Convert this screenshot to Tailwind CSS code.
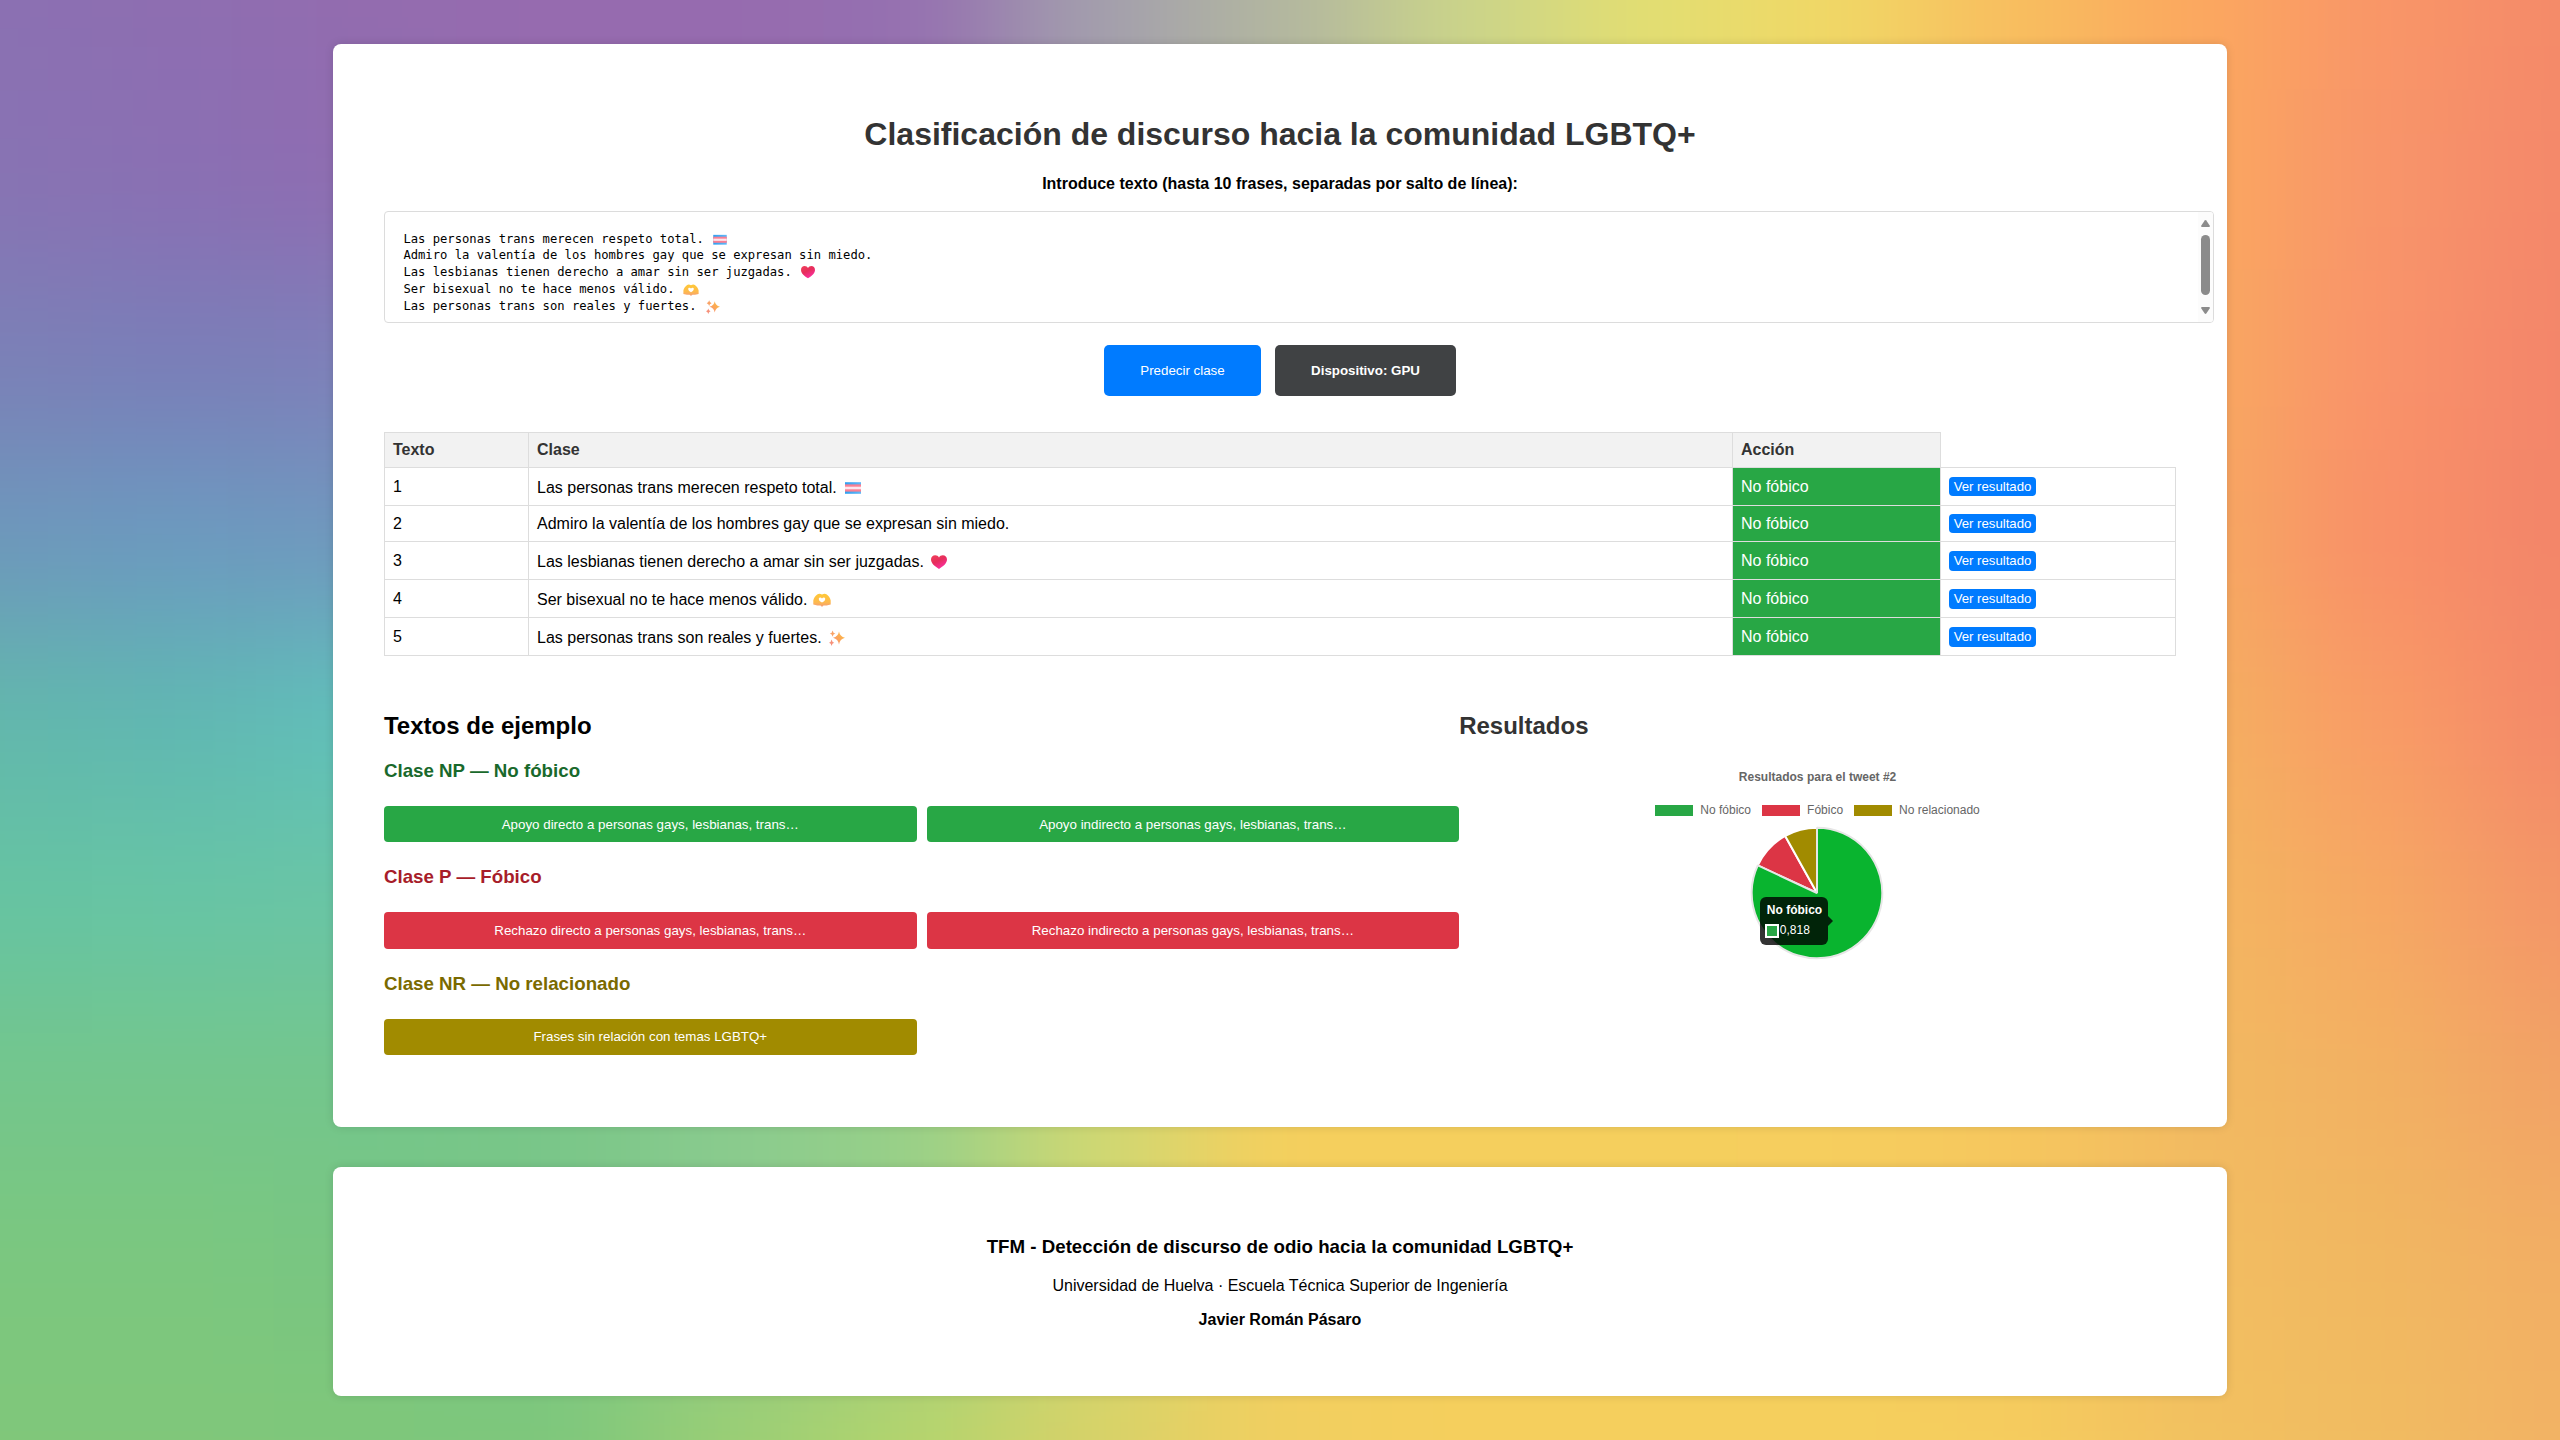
<!DOCTYPE html>
<html lang="es">
<head>
<meta charset="utf-8">
<title>Clasificación de discurso hacia la comunidad LGBTQ+</title>
<script src="https://cdn.jsdelivr.net/npm/@tailwindcss/browser@4"></script>
</head>
<body class="relative isolate h-[1440px] w-[2560px] overflow-hidden bg-[#f5cf5d] text-base text-black font-['Liberation_Sans',Arial,sans-serif]">

<!-- Soft rainbow backdrop -->
<svg class="absolute inset-0 -z-10 h-full w-full" viewBox="0 0 1568 882" preserveAspectRatio="none">
  <defs><filter id="soft" filterUnits="userSpaceOnUse" x="-300" y="-300" width="2168" height="1482" color-interpolation-filters="sRGB"><feGaussianBlur stdDeviation="40"/></filter></defs>
  <g id="mesh" filter="url(#soft)"></g>
</svg>

<!-- Emoji symbols -->
<svg class="absolute h-0 w-0">
  <defs>
    <linearGradient id="gh" x1="0" y1="0" x2="0.6" y2="1"><stop offset="0" stop-color="#f2405a"/><stop offset="0.5" stop-color="#e62e5c"/><stop offset="1" stop-color="#fb2fa0"/></linearGradient>
    <linearGradient id="gy" x1="0" y1="0" x2="0" y2="1"><stop offset="0" stop-color="#ffc936"/><stop offset="0.65" stop-color="#fdb94e"/><stop offset="1" stop-color="#f49a78"/></linearGradient>
    <linearGradient id="gs" x1="1" y1="0" x2="0" y2="1"><stop offset="0" stop-color="#fdc23c"/><stop offset="0.6" stop-color="#fba35c"/><stop offset="1" stop-color="#f5828a"/></linearGradient>
    <linearGradient id="gb" x1="0" y1="0" x2="1" y2="0"><stop offset="0" stop-color="#2f9ff0"/><stop offset="1" stop-color="#62b8f7"/></linearGradient>
    <symbol id="flag" viewBox="0 0 18 16">
      <rect x="1" y="2.2" width="16" height="11.6" fill="url(#gb)"/><rect x="1" y="4.4" width="16" height="7.2" fill="#fb7f92"/><rect x="1" y="6.7" width="16" height="2.6" fill="#fde6ee"/>
    </symbol>
    <symbol id="heart" viewBox="0 0 18 16">
      <path d="M9 15C5.4 12.9 1 9.6 1 5.6 1 3 2.8 1.2 5.2 1.2 6.9 1.2 8.3 2.1 9 3.5 9.7 2.1 11.1 1.2 12.8 1.2 15.2 1.2 17 3 17 5.6 17 9.6 12.6 12.9 9 15Z" fill="url(#gh)"/>
    </symbol>
    <symbol id="hands" viewBox="0 0 18 16">
      <path fill-rule="evenodd" d="M0.3 12.6V8.6C0.7 6 2.3 4 4.6 2.3 5.6 1.5 7.2 1.4 9 2.6 10.8 1.4 12.4 1.5 13.4 2.3 15.7 4 17.3 6 17.7 8.6V12.6L13.6 13.5C12 13.6 10.5 13.3 9.8 14L9 14.9 8.2 14C7.5 13.3 6 13.6 4.4 13.5ZM9 10.6C11 9.4 12.2 8.2 12.2 6.9 12.2 5.3 10.1 4.9 9 6.4 7.9 4.9 5.8 5.3 5.8 6.9 5.8 8.2 7 9.4 9 10.6Z" fill="url(#gy)"/>
    </symbol>
    <symbol id="sparkles" viewBox="0 0 18 16">
      <path fill="url(#gs)" d="M11 1.4Q11.8 6.4 17 7.8 11.8 9.2 11 14.4 10.2 9.2 5 7.8 10.2 6.4 11 1.4Z"/>
      <path fill="#f9a266" d="M4.6 0.4Q5 3 7.4 3.6 5 4.2 4.6 6.8 4.2 4.2 1.8 3.6 4.2 3 4.6 0.4Z"/>
      <path fill="#f69079" d="M3.6 9.6Q4 12.2 6.2 12.8 4 13.4 3.6 16 3.2 13.4 1 12.8 3.2 12.2 3.6 9.6Z"/>
    </symbol>
  </defs>
</svg>

<main class="ml-[332.8px] mt-11 flex h-[1082.5px] w-[1894.4px] flex-col rounded-lg bg-white px-[51.2px] pt-[72px] shadow-[0_0_10px_rgba(0,0,0,0.12)]">
  <h1 class="text-center text-[32px] leading-9 font-bold text-[#333]">Clasificación de discurso hacia la comunidad LGBTQ+</h1>
  <label class="mt-[23px] text-center text-base leading-[18px] font-bold">Introduce texto (hasta 10 frases, separadas por salto de línea):</label>

  <div class="mt-[18px] flex h-28 w-[1829.6px] justify-between overflow-hidden rounded border border-[#dcdcdc] bg-white">
    <div class="pl-[18.4px] pt-[19px] font-['DejaVu_Sans_Mono',monospace] text-[12.18px]">
      <div class="flex h-[17px] items-center gap-2 whitespace-nowrap">Las personas trans merecen respeto total.<svg class="h-[13.5px] w-4 shrink-0"><use href="#flag"/></svg></div>
      <div class="flex h-[15px] items-center whitespace-nowrap">Admiro la valentía de los hombres gay que se expresan sin miedo.</div>
      <div class="flex h-[18px] items-center gap-2 whitespace-nowrap">Las lesbianas tienen derecho a amar sin ser juzgadas.<svg class="h-[14px] w-4 shrink-0"><use href="#heart"/></svg></div>
      <div class="flex h-[17px] items-center gap-2 whitespace-nowrap">Ser bisexual no te hace menos válido.<svg class="h-[14px] w-4 shrink-0"><use href="#hands"/></svg></div>
      <div class="flex h-[17px] items-center gap-2 whitespace-nowrap">Las personas trans son reales y fuertes.<svg class="h-[14px] w-4 shrink-0"><use href="#sparkles"/></svg></div>
    </div>
    <div class="flex w-[15px] flex-col items-center bg-[#fcfcfc] pt-2">
      <svg class="h-[7px] w-[9px]" viewBox="0 0 9 7"><path d="M4.5 0 5.3 .6 9 6 8.4 7H.6L0 6 3.7 .6Z" fill="#8b8b8b"/></svg>
      <div class="mt-2 h-[60px] w-[9px] rounded-full bg-[#8b8b8b]"></div>
      <svg class="mt-3 h-[7px] w-[9px]" viewBox="0 0 9 7"><path d="M4.5 7 5.3 6.4 9 1 8.4 0H.6L0 1 3.7 6.4Z" fill="#8b8b8b"/></svg>
    </div>
  </div>

  <div class="mt-[22px] flex justify-center gap-3.5 text-[13.333px] text-white">
    <button class="h-[51px] w-[157px] rounded-[5px] bg-[#007bff]">Predecir clase</button>
    <button class="h-[51px] w-[181px] rounded-[5px] bg-[#404244] font-bold">Dispositivo: GPU</button>
  </div>

  <table class="mt-9 w-[1792px] table-fixed border-collapse text-left text-base leading-[18px]">
    <colgroup><col class="w-36"><col class="w-[1204px]"><col class="w-[208px]"><col></colgroup>
    <thead>
      <tr class="h-[35px] text-[#333]">
        <th class="border border-[#ddd] bg-[#f2f2f2] px-2 py-0">Texto</th>
        <th class="border border-[#ddd] bg-[#f2f2f2] px-2 py-0">Clase</th>
        <th class="border border-[#ddd] bg-[#f2f2f2] px-2 py-0">Acción</th>
      </tr>
    </thead>
    <tbody>
      <tr class="h-[38px]">
        <td class="border border-[#ddd] px-2">1</td>
        <td class="border border-[#ddd] px-2"><div class="flex items-center pt-0.5">Las personas trans merecen respeto total.<svg class="ml-[7px] h-4 w-[18px]"><use href="#flag"/></svg></div></td>
        <td class="border border-[#ddd] bg-[#28a745] px-2 text-white">No fóbico</td>
        <td class="border border-[#ddd] px-2"><button class="block h-[19px] w-[87px] rounded-[4px] bg-[#007bff] text-[13.2px] leading-[19px] text-white">Ver resultado</button></td>
      </tr>
      <tr class="h-9">
        <td class="border border-[#ddd] px-2">2</td>
        <td class="border border-[#ddd] px-2">Admiro la valentía de los hombres gay que se expresan sin miedo.</td>
        <td class="border border-[#ddd] bg-[#28a745] px-2 text-white">No fóbico</td>
        <td class="border border-[#ddd] px-2"><button class="block h-[19px] w-[87px] rounded-[4px] bg-[#007bff] text-[13.2px] leading-[19px] text-white">Ver resultado</button></td>
      </tr>
      <tr class="h-[38px]">
        <td class="border border-[#ddd] px-2">3</td>
        <td class="border border-[#ddd] px-2"><div class="flex items-center pt-0.5">Las lesbianas tienen derecho a amar sin ser juzgadas.<svg class="ml-1.5 h-4 w-[18px]"><use href="#heart"/></svg></div></td>
        <td class="border border-[#ddd] bg-[#28a745] px-2 text-white">No fóbico</td>
        <td class="border border-[#ddd] px-2"><button class="block h-5 w-[87px] rounded-[4px] bg-[#007bff] text-[13.2px] leading-[19px] text-white">Ver resultado</button></td>
      </tr>
      <tr class="h-[38px]">
        <td class="border border-[#ddd] px-2">4</td>
        <td class="border border-[#ddd] px-2"><div class="flex items-center pt-0.5">Ser bisexual no te hace menos válido.<svg class="ml-1.5 h-4 w-[18px]"><use href="#hands"/></svg></div></td>
        <td class="border border-[#ddd] bg-[#28a745] px-2 text-white">No fóbico</td>
        <td class="border border-[#ddd] px-2"><button class="block h-5 w-[87px] rounded-[4px] bg-[#007bff] text-[13.2px] leading-[19px] text-white">Ver resultado</button></td>
      </tr>
      <tr class="h-[38px]">
        <td class="border border-[#ddd] px-2">5</td>
        <td class="border border-[#ddd] px-2"><div class="flex items-center pt-0.5">Las personas trans son reales y fuertes.<svg class="ml-1.5 h-4 w-[18px]"><use href="#sparkles"/></svg></div></td>
        <td class="border border-[#ddd] bg-[#28a745] px-2 text-white">No fóbico</td>
        <td class="border border-[#ddd] px-2"><button class="block h-5 w-[87px] rounded-[4px] bg-[#007bff] text-[13.2px] leading-[19px] text-white">Ver resultado</button></td>
      </tr>
    </tbody>
  </table>

  <div class="mt-14 flex">
    <section class="flex w-[1075.2px] flex-col">
      <h2 class="text-2xl leading-7 font-bold">Textos de ejemplo</h2>
      <h3 class="mt-5 text-[18.72px] leading-[22px] font-bold text-[#19692c]">Clase NP — No fóbico</h3>
      <div class="mt-6 grid grid-cols-2 gap-2.5 text-[13.333px] text-white">
        <button class="h-9 rounded-[4px] bg-[#28a745] pt-px">Apoyo directo a personas gays, lesbianas, trans…</button>
        <button class="h-9 rounded-[4px] bg-[#28a745] pt-px">Apoyo indirecto a personas gays, lesbianas, trans…</button>
      </div>
      <h3 class="mt-6 text-[18.72px] leading-[22px] font-bold text-[#a71d2a]">Clase P — Fóbico</h3>
      <div class="mt-6 grid grid-cols-2 gap-2.5 text-[13.333px] text-white">
        <button class="h-[37px] rounded-[4px] bg-[#dc3545]">Rechazo directo a personas gays, lesbianas, trans…</button>
        <button class="h-[37px] rounded-[4px] bg-[#dc3545]">Rechazo indirecto a personas gays, lesbianas, trans…</button>
      </div>
      <h3 class="mt-6 text-[18.72px] leading-[22px] font-bold text-[#7a6a00]">Clase NR — No relacionado</h3>
      <div class="mt-6 grid grid-cols-2 gap-2.5 text-[13.333px] text-white">
        <button class="h-9 rounded-[4px] bg-[#a18b00]">Frases sin relación con temas LGBTQ+</button>
      </div>
    </section>

    <section class="flex w-[716.8px] flex-col items-center">
      <h2 class="w-full text-2xl leading-7 font-bold text-[#333]">Resultados</h2>
      <div class="mt-[30px] text-xs leading-[14px] font-bold text-[#666]">Resultados para el tweet #2</div>
      <div class="mt-[19px] flex gap-[11px] text-xs leading-[14px] text-[#666]">
        <div class="flex items-center gap-[7px]"><span class="h-[11px] w-[38px] bg-[#28a745]"></span>No fóbico</div>
        <div class="flex items-center gap-[7px]"><span class="h-[11px] w-[38px] bg-[#dc3545]"></span>Fóbico</div>
        <div class="flex items-center gap-[7px]"><span class="h-[11px] w-[38px] bg-[#a18b00]"></span>No relacionado</div>
      </div>
      <div class="relative mt-[6px] mr-[1.5px] h-[140px] w-[140px]">
        <svg class="h-full w-full" viewBox="-70 -70 140 140">
          <g stroke-width="2" stroke-linejoin="bevel">
            <path d="M0 0 L-59.2 -27.6 A65.3 65.3 0 0 1 -31.8 -57.1Z" fill="#dc3545" stroke="#fff"/>
            <path d="M0 0 L-31.8 -57.1 A65.3 65.3 0 0 1 0 -65.3Z" fill="#a18b00" stroke="#fff"/>
            <path d="M0 0 L0 -65.3 A65.3 65.3 0 1 1 -59.2 -27.6Z" fill="#09b42f" stroke="#e6e6e6"/>
          </g>
        </svg>
        <div class="absolute left-[13px] top-[74px] h-12 w-[68px] rounded-md bg-black/80 text-xs leading-[14px] text-white">
          <div class="pl-[7px] pt-[6px] font-bold">No fóbico</div>
          <div class="mt-[6px] flex items-start gap-px pl-[5px]"><span class="mt-px h-3.5 w-3.5 border-2 border-white bg-[#28a745]"></span>0,818</div>
          <svg class="absolute left-full top-[19px] h-2.5 w-[5px]" viewBox="0 0 5 10"><path d="M0 0 5 5 0 10Z" fill="#000" fill-opacity="0.8"/></svg>
        </div>
      </div>
    </section>
  </div>
</main>

<footer class="ml-[332.8px] mt-[40.5px] flex h-[228.7px] w-[1894.4px] flex-col items-center rounded-lg bg-white pt-[69px] shadow-[0_0_10px_rgba(0,0,0,0.12)]">
  <h3 class="text-[18.72px] leading-[22px] font-bold">TFM - Detección de discurso de odio hacia la comunidad LGBTQ+</h3>
  <p class="mt-[19px] leading-[18px]">Universidad de Huelva · Escuela Técnica Superior de Ingeniería</p>
  <p class="mt-4 leading-[18px] font-bold">Javier Román Pásaro</p>
</footer>

<script>
  // Colour mesh: rows top to bottom, columns left to right
  const mesh = [
    '8b70b2 8e6eb1 936caf 966baf 966baf 9570b0 a39fad b2b6a0 cad48a e2de72 f0d866 f8be5f fba85f f99668 f48a69',
    '8873b3 8a6fb3 8f6cb1 966baf 966baf 9570b0 a39fad b2b6a0 cad48a e2de72 f0d866 f8be5f fba85f f8956a f4886a',
    '7b80b7 7a7eb8 7f80b9 7f80b9 966baf 9570b0 a39fad b2b6a0 cad48a e2de72 f0d866 f8be5f f9a960 f9936a f3856a',
    '6d98bc 6c9ac0 7098be 7098be a0b0a0 a0b0a0 a0b0a0 b2b6a0 cad48a e2de72 f0d866 f8be5f f6a962 f98f68 f28569',
    '62b8ac 60b8b2 60c1bb 60c1bb 80c0a0 80c0a0 a0c0a0 b2c6a0 cad48a e2de72 f0d866 f5bc5f f4b060 f99c66 f38869',
    '66c4a2 67c5a5 6ac5a5 6ac5a5 80c890 90cc90 b0d080 d8d070 f5cf5d f5cf5d f5cf5d f5c05f f3b660 f6a863 f39568',
    '74c68c 74c68c 74c68c 79c688 8acb8e 98d088 cfd873 f5cf5d f5cf5d f5cf5d f6ce5e f6c75e f2b961 f2b162 f2a266',
    '7bc77f 7bc77f 78c682 79c688 8acb8e 98d088 cfd873 f5cf5d f5cf5d f5cf5d f6ce5e f6c75e f2bd61 f1b761 f2ae64',
    '80c77a 80c77a 7fc77a 7dc77c 9bce74 b5d46c d8d268 f1cf60 f5cf5d f5cf5d f5cf5d f5cd5e f2c160 f1bc61 f2b264'
  ];
  const layer = document.getElementById('mesh');
  const W = 112, H = 110.25, PAD = 200;
  mesh.forEach((row, r) => row.split(' ').forEach((color, c) => {
    const rect = document.createElementNS('http://www.w3.org/2000/svg', 'rect');
    const x0 = c === 0 ? -PAD : (c - 0.5) * W, x1 = c === 14 ? 1568 + PAD : (c + 0.5) * W + 1;
    const y0 = r === 0 ? -PAD : (r - 0.5) * H, y1 = r === 8 ? 882 + PAD : (r + 0.5) * H + 1;
    rect.setAttribute('x', x0); rect.setAttribute('y', y0);
    rect.setAttribute('width', x1 - x0); rect.setAttribute('height', y1 - y0);
    rect.setAttribute('fill', '#' + color);
    layer.appendChild(rect);
  }));
</script>
</body>
</html>
